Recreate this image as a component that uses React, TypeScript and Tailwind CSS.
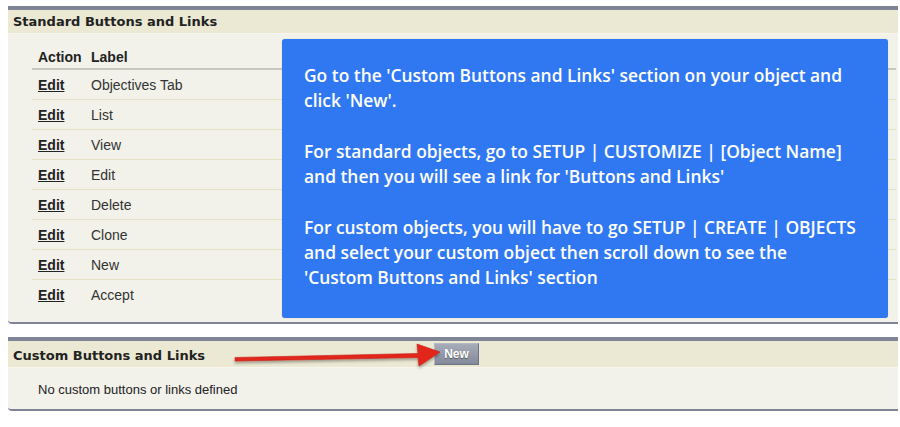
import React from "react";

const rows = ["Objectives Tab", "List", "View", "Edit", "Delete", "Clone", "New", "Accept"];

export default function App() {
  return (
    <div className="relative w-[900px] h-[427px] bg-white font-['Liberation_Sans',Arial,sans-serif] text-[#222] overflow-hidden">
      <div className="pt-[6px] pl-[8px] pr-[2px] flex flex-col">
        {/* Panel 1 */}
        <div className="border-t-4 border-[#7f8497]">
          <div className="h-[24px] bg-[#ebe9d3] pl-[5px] flex items-center font-['DejaVu_Sans',Verdana,sans-serif] font-bold text-[13px] text-[#222] border-b border-[#f8f7ef]">
            Standard Buttons and Links
          </div>
          <div className="bg-[#f2f1ea] pl-[24px] pr-[2px] pb-[11px] border-b-2 border-[#7f8497] rounded-bl-[4px] h-[290px]">
            <div className="h-[36px] flex items-end pb-[3px] leading-[16px] text-[14px] font-bold border-b-2 border-[#c8c8c0]">
              <div className="w-[59px] pl-[6px]">Action</div>
              <div>Label</div>
            </div>
            {rows.map((r, i) => (
              <div
                key={r}
                className={
                  i < rows.length - 1
                    ? "h-[30px] flex items-center text-[14px] leading-[16px] border-b border-[#e4e0c4]"
                    : "h-[30px] flex items-center text-[14px] leading-[16px]"
                }
              >
                <div className="w-[59px] pl-[6px] font-bold underline text-[#222]">Edit</div>
                <div className="text-[#333]">{r}</div>
              </div>
            ))}
          </div>
        </div>

        {/* Panel 2 */}
        <div className="mt-[13px] border-t-4 border-[#7f8497]">
          <div className="h-[27px] bg-[#ebe9d3] pl-[5px] flex items-center border-b border-[#f8f7ef]">
            <div className="w-[421px] pt-[3px] font-['DejaVu_Sans',Verdana,sans-serif] font-bold text-[13px] text-[#222]">
              Custom Buttons and Links
            </div>
            <div className="h-[22px] w-[45px] flex items-center justify-center bg-gradient-to-b from-[#a7acb9] to-[#838a9c] border border-[#6e7384] border-t-[#b5b9c4] border-l-[#b5b9c4] text-white font-bold text-[12px] [text-shadow:0_1px_1px_#555]">
              New
            </div>
          </div>
          <div className="h-[43px] bg-[#f2f1ea] pl-[30px] pt-[3px] flex items-center text-[13px] text-[#222] border-b-2 border-[#7f8497] rounded-bl-[4px]">
            No custom buttons or links defined
          </div>
        </div>
      </div>

      {/* Blue annotation */}
      <div className="absolute left-[282px] top-[39px] w-[606px] h-[279px] bg-[#2f78f2] rounded-[3px] pl-[22px] pt-[24px] pr-[6px] text-white font-['Open_Sans',sans-serif] font-semibold text-[17.4px] leading-[25.25px] whitespace-nowrap shadow-[0_0_1px_rgba(0,0,0,0.3)]">
        <p>Go to the 'Custom Buttons and Links' section on your object and</p>
        <p>click 'New'.</p>
        <p>&nbsp;</p>
        <p>For standard objects, go to SETUP | CUSTOMIZE | [Object Name]</p>
        <p>and then you will see a link for 'Buttons and Links'</p>
        <p>&nbsp;</p>
        <p>For custom objects, you will have to go SETUP | CREATE | OBJECTS</p>
        <p>and select your custom object then scroll down to see the</p>
        <p>'Custom Buttons and Links' section</p>
      </div>

      {/* Red arrow */}
      <svg className="absolute left-[228px] top-[338px]" width="220" height="36" viewBox="0 0 220 36">
        <defs>
          <filter id="sh" x="-10%" y="-50%" width="120%" height="200%">
            <feDropShadow dx="0" dy="2" stdDeviation="1.5" floodColor="#000" floodOpacity="0.35" />
          </filter>
        </defs>
        <path
          d="M7 19.5 L190 15.5 L189 6 L212 14 L191 28 L190 19.5 L7 23 Z"
          fill="#e2261c"
          stroke="#c81d15"
          strokeWidth="0.6"
          strokeLinejoin="round"
          filter="url(#sh)"
        />
      </svg>
    </div>
  );
}
